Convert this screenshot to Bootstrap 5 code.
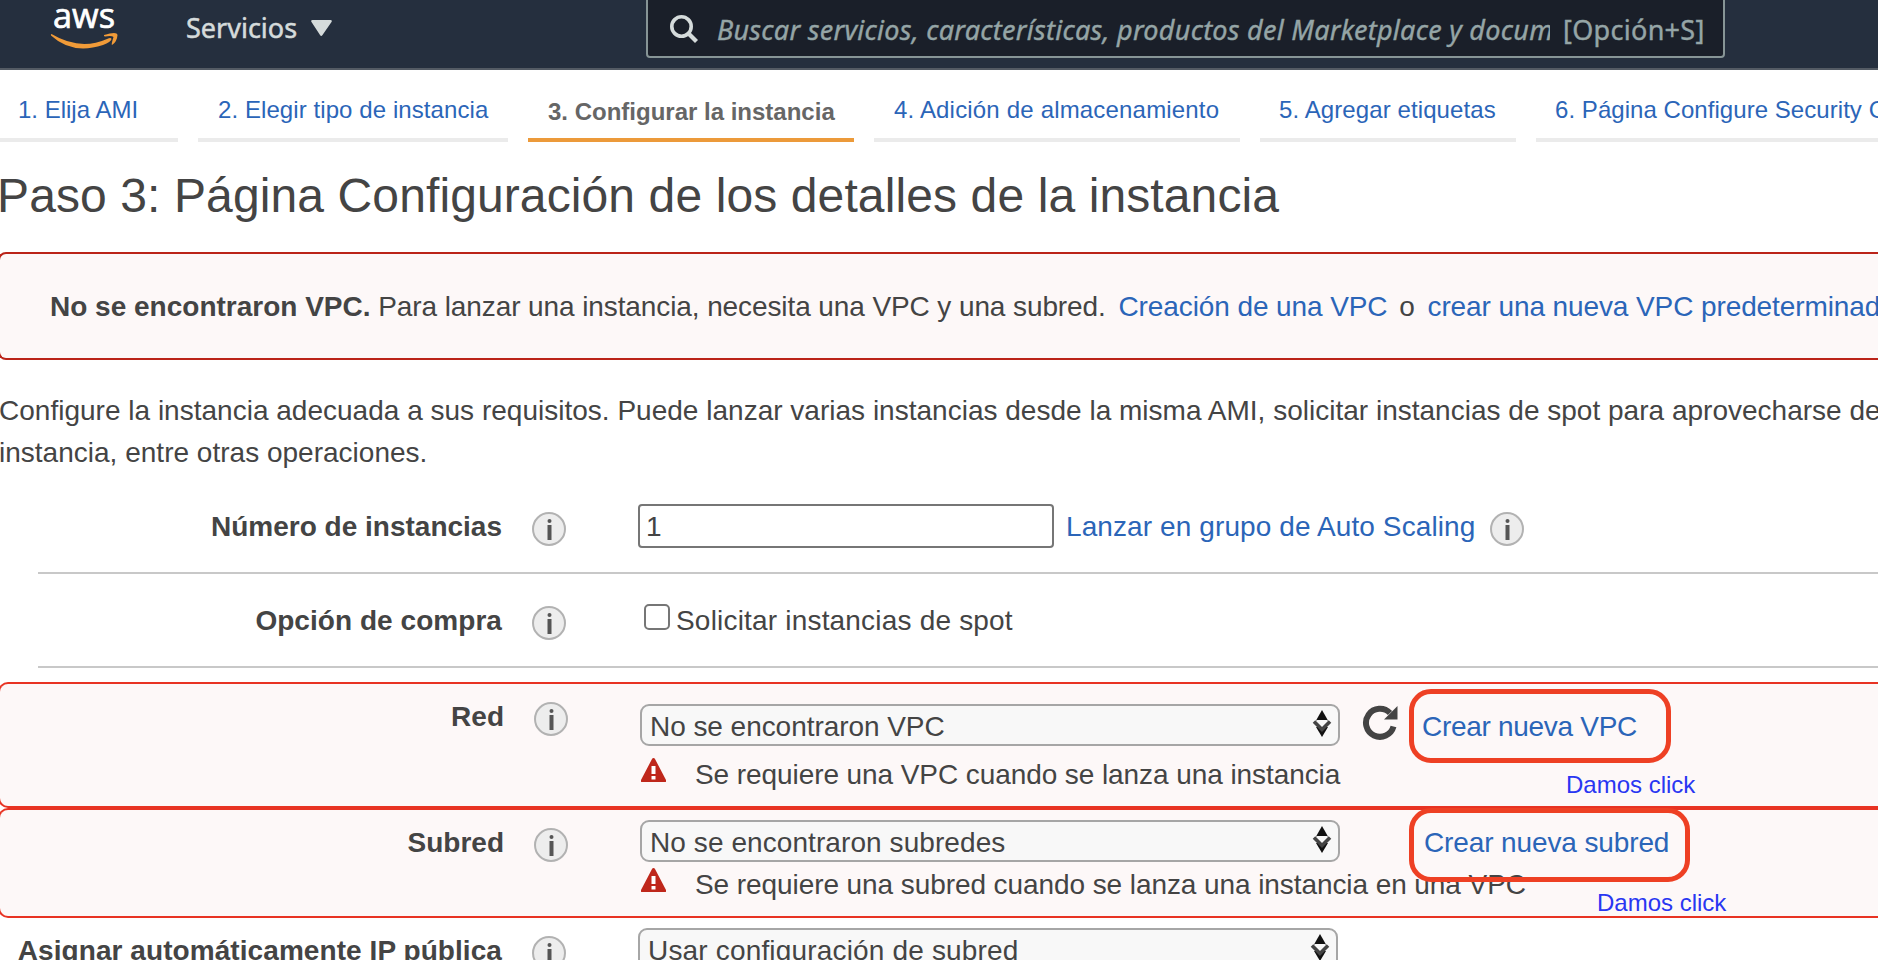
<!DOCTYPE html>
<html lang="es">
<head>
<meta charset="utf-8">
<title>Configurar la instancia</title>
<link href="https://cdn.jsdelivr.net/npm/bootstrap@5.3.0/dist/css/bootstrap.min.css" rel="stylesheet">
<style>
body{font-family:"Liberation Sans",Arial,sans-serif;font-size:28px;line-height:34px;color:#444;background:#fff;height:960px;overflow:hidden;white-space:nowrap}
a{color:#2b65b8;text-decoration:none}
b{font-weight:700}
svg{display:block;flex:none}
.topbar{height:70px;background:#252f3e;border-bottom:2px solid #545b64;font-family:"Noto Sans","Open Sans",sans-serif;font-size:27px}
.services{margin-left:68px;width:113px;color:#d5dbdb;line-height:56px;-webkit-text-stroke:.5px #d5dbdb}
.searchbox{width:1079px;height:62px;margin:-4px 0 0 314px;background:#1a1f29;border:2px solid #879596;border-radius:4px;color:#95a5a6;padding-left:22px;line-height:64px;-webkit-text-stroke:.4px #95a5a6}
.query{width:833px;margin-left:19px;font-style:italic;overflow:hidden;letter-spacing:.27px}
.hotkey{letter-spacing:.3px}
.steps{height:72px;gap:20px;font-size:24px;line-height:32px}
.step-tab{height:72px;border-bottom:4px solid #ebebeb;padding:24px 0 0 20px;flex:none}
.step-tab.current{border-color:#ec9a3a;color:#666;font-weight:700;padding-top:26px}
.heading{font-size:48px;line-height:60px;margin:24px 0 0 -3px;font-weight:400;letter-spacing:.11px}
.notice{height:108px;margin:26px 0 0 -2px;border:2px solid #bb2419;border-right:0;border-radius:8px 0 0 8px;background:#fdf8f8;padding:36px 0 0 50px}
.notice span,.notice a{letter-spacing:-.1px}
.tight{letter-spacing:-.08px}
.intro{line-height:42px;margin:30px 0 0 -1px;letter-spacing:.01px}
.form-line{position:relative}
.lbl{width:502px;text-align:right;font-weight:700;flex:none}
.info-dot{margin-left:30px}
.line1{height:98px;padding-top:30px}
.rule{border-top:2px solid #c8c8c8;margin-left:38px}
.num{width:416px;height:44px;border:2px solid #767676;border-radius:4px;padding:4px 6px;margin-left:72px}
.tick{width:26px;height:26px;border:2px solid #767676;border-radius:5px;background:#fff;margin-left:78px}
.invalid{border:2px solid #e83323;border-right:0;border-radius:10px 0 0 10px;background:#fdf8f8;margin-left:-2px;padding-left:2px}
.pick{width:700px;height:42px;border:2px solid #a6a6a6;border-radius:9px;background:#f8f8f8;padding:0 6px 0 8px;line-height:42px;flex:none}
.ring{position:absolute;border:5px solid #ee4024;border-radius:22px}
.remark{position:absolute;color:#2936f2;font-size:24px;line-height:28px}
</style>
</head>
<body>
<svg width="0" height="0" class="position-absolute"><defs>
<g id="info"><circle cx="17" cy="17" r="16" fill="#ededed" stroke="#b2b2b2" stroke-width="2"/><circle cx="17.500" cy="9" r="2" fill="#555"/><path d="M15.500 13h4v15h-4z" fill="#555"/></g>
<g id="arrows"><path d="M10 0l6 10.500H4z" fill="#111"/><path d="M4 17h12l-6 10z" fill="#111"/><path d="M4.500 10h11l-5.500 7z" fill="#f8f8f8"/><path d="M2 11.500L10 19.500l8-8" fill="none" stroke="#444" stroke-width="3.600"/></g>
<g id="warn"><path d="M12.500 0q1 0 1.500 1l11 21q.7 2-1 2H1q-1.700 0-1-2L11 1q.5-1 1.500-1z" fill="#bf271b"/><path d="M10.500 8h4v8h-4zM10.500 18h4v3.500h-4z" fill="#fff"/></g>
</defs></svg>
<nav class="topbar d-flex align-items-start">
<svg width="118" height="56" viewBox="0 0 118 56"><text x="53" y="28" textLength="62" lengthAdjust="spacingAndGlyphs" font-family="Open Sans" font-size="34" fill="#fff" stroke="#fff" stroke-width=".7">aws</text><path d="M51.500 34Q80 51 107 39Q111 37 111.500 39Q111 42 103 45Q72 55 51 35.500Q50.500 34 51.500 34z" fill="#f19b38"/><path d="M104 35Q117 31 117.500 35Q117 42 112 45Q111 45 113.500 37Q112 35.500 105 36.500Q103.500 36 104 35z" fill="#f19b38"/></svg>
<div class="services">Servicios</div>
<svg width="21" height="17" viewBox="0 0 21 17" style="margin:20px 0 0 12px"><path d="M1.500 0h18q2 0 1 2L11.500 15q-1.300 2-2.500 0L.5 2Q-.5 0 1.500 0z" fill="#d5dbdb"/></svg>
<div class="searchbox d-flex align-items-start">
<svg width="28" height="28" viewBox="0 0 28 28" style="margin-top:17px"><circle cx="11.500" cy="11.500" r="9.700" fill="none" stroke="#d5dbdb" stroke-width="3.600"/><path d="M18 18l8.500 8.500" stroke="#d5dbdb" stroke-width="4.200"/></svg>
<div class="query">Buscar servicios, características, productos del Marketplace y documentos</div>
<div class="hotkey" style="margin-left:13px">[Opción+S]</div>
</div>
</nav>
<div class="steps d-flex">
<div class="step-tab" style="width:178px;padding-left:18px"><a href="#">1. Elija AMI</a></div>
<div class="step-tab" style="width:310px"><a href="#" style="letter-spacing:.08px">2. Elegir tipo de instancia</a></div>
<div class="step-tab current" style="width:326px">3. Configurar la instancia</div>
<div class="step-tab" style="width:366px"><a href="#" style="letter-spacing:.18px">4. Adición de almacenamiento</a></div>
<div class="step-tab" style="width:256px;padding-left:19px"><a href="#" style="letter-spacing:.1px">5. Agregar etiquetas</a></div>
<div class="step-tab" style="width:400px;padding-left:19px"><a href="#" style="letter-spacing:.05px">6. Página Configure Security Group</a></div>
</div>
<h1 class="heading">Paso 3: Página Configuración de los detalles de la instancia</h1>
<div class="notice"><b>No se encontraron VPC.</b> <span>Para lanzar una instancia, necesita una VPC y una subred.</span> <a href="#" style="margin-left:5px">Creación de una VPC</a> <span style="margin:0 5px 0 4px">o</span> <a href="#">crear una nueva VPC predeterminada</a></div>
<p class="intro">Configure la instancia adecuada a sus requisitos. Puede lanzar varias instancias desde la misma AMI, solicitar instancias de spot para aprovecharse del<br>instancia, entre otras operaciones.</p>
<div class="form-line line1 d-flex align-items-start">
<div class="lbl" style="padding-top:6px">Número de instancias</div>
<svg class="info-dot" width="34" height="34" style="margin-top:8px"><use href="#info"/></svg>
<div class="num">1</div>
<a href="#" style="margin:6px 0 0 12px;letter-spacing:.1px">Lanzar en grupo de Auto Scaling</a>
<svg width="34" height="34" style="margin:8px 0 0 15px"><use href="#info"/></svg>
</div>
<div class="rule"></div>
<div class="form-line d-flex align-items-start" style="height:92px;padding-top:30px">
<div class="lbl" style="letter-spacing:.05px">Opción de compra</div>
<svg class="info-dot" width="34" height="34" style="margin-top:2px"><use href="#info"/></svg>
<div class="tick"></div>
<span style="margin-left:6px;letter-spacing:.19px">Solicitar instancias de spot</span>
</div>
<div class="rule" style="margin-bottom:14px"></div>
<div class="form-line invalid d-flex align-items-start" style="height:126px">
<div class="lbl" style="padding-top:16px">Red</div>
<svg class="info-dot" width="34" height="34" style="margin-top:18px"><use href="#info"/></svg>
<div style="margin:20px 0 0 72px">
<div class="d-flex align-items-start">
<div class="pick d-flex justify-content-between" style="letter-spacing:-.05px">No se encontraron VPC<svg width="20" height="28" style="margin-top:4px"><use href="#arrows"/></svg></div>
<svg width="36" height="36" viewBox="0 0 36 36" style="margin:0 0 0 22px"><path d="M28 9A14 14 0 1 0 31.500 22.500" fill="none" stroke="#444" stroke-width="6"/><path d="M35.500 2v13.500H22z" fill="#444"/></svg>
<a href="#" style="margin:6px 0 0 24px;letter-spacing:-.3px">Crear nueva VPC</a>
</div>
<div class="d-flex" style="margin-top:12px"><svg width="25" height="24" style="margin:0 0 0 1px"><use href="#warn"/></svg><span class="tight" style="margin-left:29px">Se requiere una VPC cuando se lanza una instancia</span></div>
</div>
<div class="ring" style="left:1409px;top:5px;width:262px;height:74px"></div>
<div class="remark" style="left:1566px;top:87px">Damos click</div>
</div>
<div class="form-line invalid d-flex align-items-start" style="height:110px">
<div class="lbl" style="padding-top:16px">Subred</div>
<svg class="info-dot" width="34" height="34" style="margin-top:18px"><use href="#info"/></svg>
<div style="margin:10px 0 0 72px">
<div class="d-flex align-items-start">
<div class="pick d-flex justify-content-between" style="letter-spacing:.08px">No se encontraron subredes<svg width="20" height="28" style="margin-top:4px"><use href="#arrows"/></svg></div>
<a href="#" style="margin:6px 0 0 84px;letter-spacing:-.12px">Crear nueva subred</a>
</div>
<div class="d-flex" style="margin-top:6px"><svg width="25" height="24" style="margin:0 0 0 1px"><use href="#warn"/></svg><span class="tight" style="margin-left:29px">Se requiere una subred cuando se lanza una instancia en una VPC</span></div>
</div>
<div class="ring" style="left:1409px;top:-2px;width:281px;height:74px"></div>
<div class="remark" style="left:1597px;top:79px">Damos click</div>
</div>
<div class="form-line d-flex align-items-start" style="height:42px">
<div class="lbl" style="padding-top:16px;letter-spacing:.07px">Asignar automáticamente IP pública</div>
<svg class="info-dot" width="34" height="34" style="margin-top:18px"><use href="#info"/></svg>
<div class="pick d-flex justify-content-between" style="margin:10px 0 0 72px;letter-spacing:.17px">Usar configuración de subred<svg width="20" height="28" style="margin-top:4px"><use href="#arrows"/></svg></div>
</div>
<script src="https://cdn.jsdelivr.net/npm/bootstrap@5.3.0/dist/js/bootstrap.bundle.min.js"></script>
</body>
</html>
